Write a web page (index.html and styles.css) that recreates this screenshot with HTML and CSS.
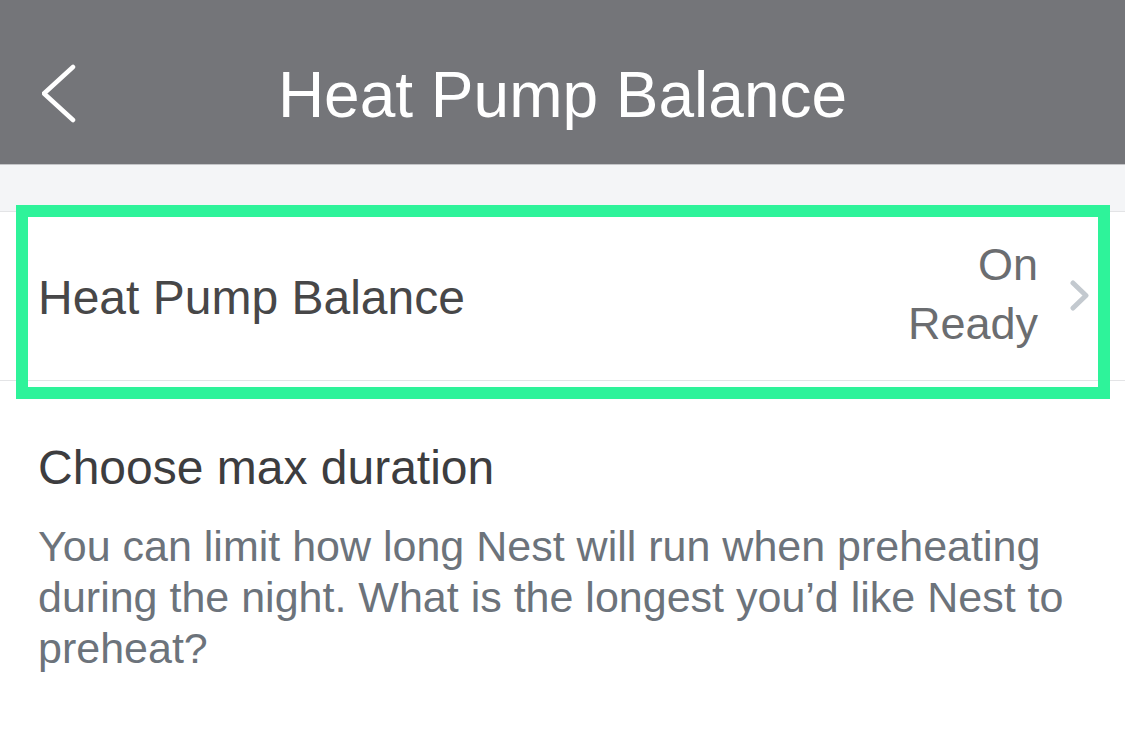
FILE: index.html
```html
<!DOCTYPE html>
<html>
<head>
<meta charset="utf-8">
<link rel="stylesheet" href="styles.css">
</head>
<body>
<header class="topbar">
  <div class="back">
    <svg width="40" height="64" viewBox="0 0 40 64"><path d="M31 4 L2 30.5 L31 57" fill="none" stroke="#fff" stroke-width="4.5" stroke-linecap="round" stroke-linejoin="round"/></svg>
  </div>
  <h1 class="title">Heat Pump Balance</h1>
  <div></div>
</header>
<div class="band"></div>
<div class="row">
  <div class="row-label">Heat Pump Balance</div>
  <div class="row-right">
    <div class="row-value">On<br>Ready</div>
    <svg class="chev" width="22" height="32" viewBox="0 0 22 32"><path d="M4 3 L17 15.5 L4 28" fill="none" stroke="#c3c9cf" stroke-width="5" stroke-linecap="round" stroke-linejoin="round"/></svg>
  </div>
  <div class="highlight"></div>
</div>
<section class="info">
  <h2 class="info-title">Choose max duration</h2>
  <p class="info-text">You can limit how long Nest will run when preheating during the night. What is the longest you’d like Nest to preheat?</p>
</section>
</body>
</html>
```
FILE: styles.css
```css
html, body {
  margin: 0;
  padding: 0;
  background: #ffffff;
  font-family: "Liberation Sans", Arial, sans-serif;
}
.topbar {
  box-sizing: border-box;
  height: 165px;
  padding-top: 26px;
  background: #747579;
  border-bottom: 1px solid #c4c5c8;
  display: grid;
  grid-template-columns: 1fr auto 1fr;
  align-items: center;
}
.back {
  padding-left: 42px;
  display: flex;
  align-items: center;
}
.back svg { display: block; }
.title {
  margin: 0;
  font-size: 64px;
  line-height: 64px;
  font-weight: normal;
  color: #ffffff;
  white-space: nowrap;
}
.band {
  height: 46px;
  background: #f4f5f7;
}
.row {
  position: relative;
  box-sizing: border-box;
  height: 170px;
  border-top: 1px solid #e3e4e6;
  border-bottom: 1px solid #e3e4e6;
  display: flex;
  align-items: center;
  justify-content: space-between;
  padding: 0 34px 0 38px;
}
.row-label {
  font-size: 48px;
  line-height: 56px;
  color: #474748;
  padding-top: 4px;
}
.row-right {
  display: flex;
  align-items: center;
  gap: 31px;
}
.row-value {
  text-align: right;
  font-size: 45px;
  line-height: 59px;
  color: #6b6d70;
  margin-top: -4px;
}
.chev { display: block; }
.highlight {
  position: absolute;
  top: -7px;
  left: 16px;
  right: 15px;
  bottom: -19px;
  border: 12px solid #2ef39a;
  pointer-events: none;
}
.info {
  padding: 59px 38px 0 38px;
}
.info-title {
  margin: 0;
  font-size: 48px;
  line-height: 56px;
  font-weight: normal;
  color: #3d3d3f;
}
.info-text {
  margin: 25px 0 0 0;
  font-size: 43px;
  line-height: 51px;
  color: #6c737b;
}
```
